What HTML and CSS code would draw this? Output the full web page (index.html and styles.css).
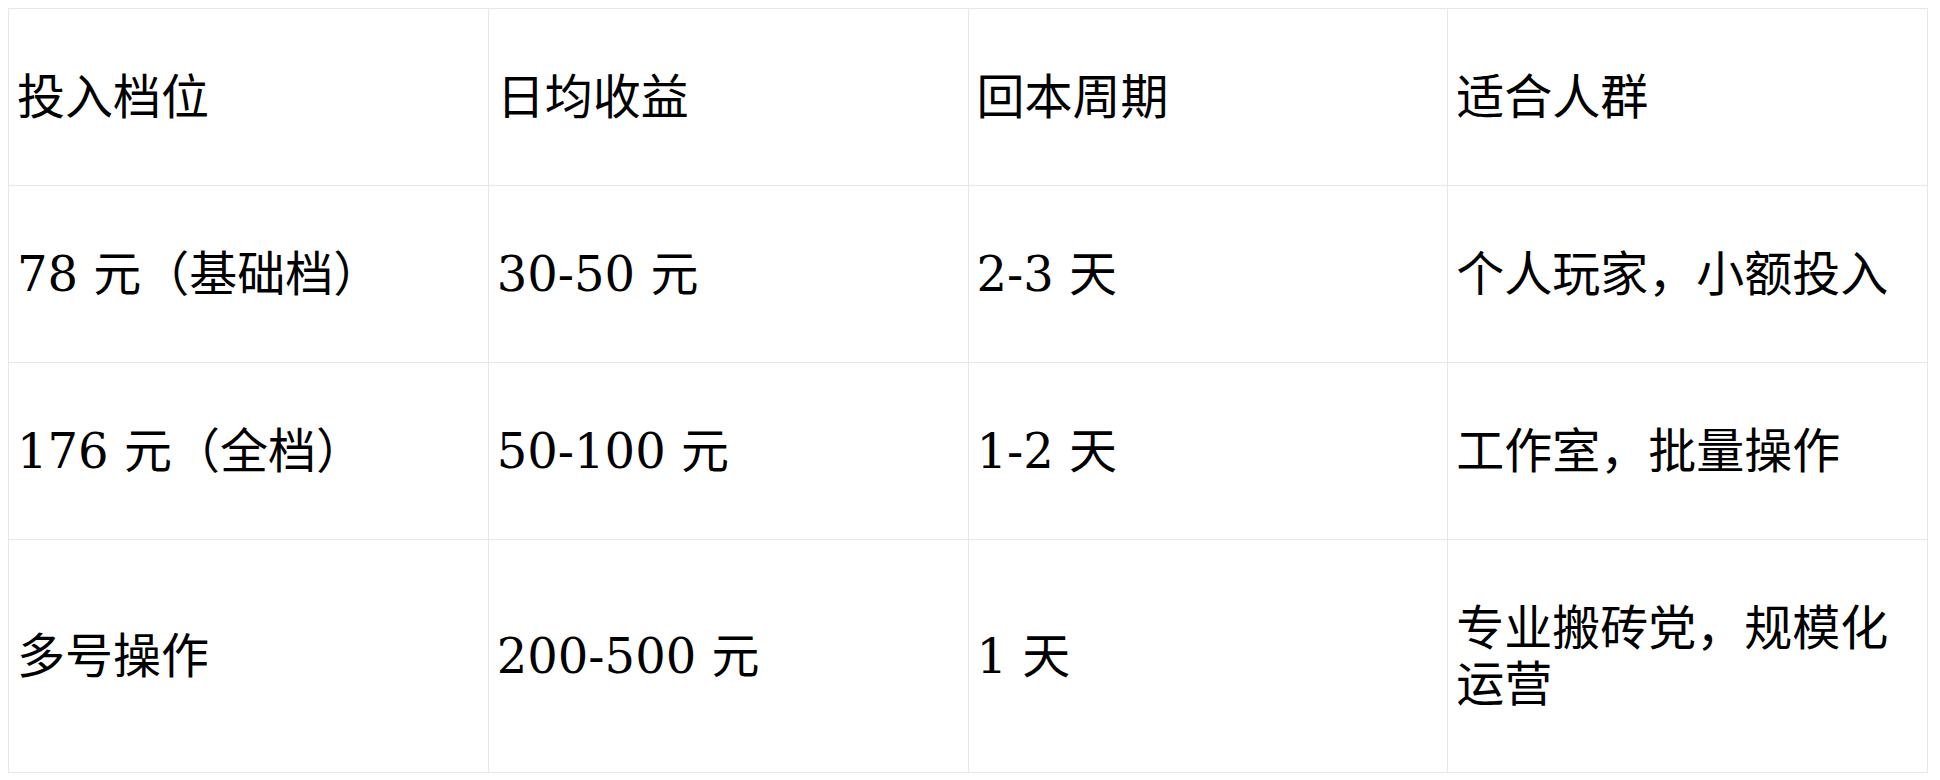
FILE: index.html
```html
<!DOCTYPE html>
<html lang="zh-CN">
<head>
<meta charset="utf-8">
<title>投入档位</title>
<link rel="stylesheet" href="styles.css">
</head>
<body>
<table class="plan-table">
  <thead>
    <tr>
      <th>投入档位</th>
      <th>日均收益</th>
      <th>回本周期</th>
      <th>适合人群</th>
    </tr>
  </thead>
  <tbody>
    <tr>
      <td>78 元（基础档）</td>
      <td>30-50 元</td>
      <td>2-3 天</td>
      <td>个人玩家，小额投入</td>
    </tr>
    <tr>
      <td>176 元（全档）</td>
      <td>50-100 元</td>
      <td>1-2 天</td>
      <td>工作室，批量操作</td>
    </tr>
    <tr>
      <td>多号操作</td>
      <td>200-500 元</td>
      <td>1 天</td>
      <td>专业搬砖党，规模化运营</td>
    </tr>
  </tbody>
</table>
</body>
</html>
```

FILE: styles.css
```css
html, body {
  background: #ffffff;
}
body {
  margin: 8px;
  font-family: "DejaVu Serif", "Noto Sans CJK SC", serif;
  color: #000000;
}
.plan-table {
  width: 1920px;
  border-collapse: collapse;
  table-layout: fixed;
  font-size: 48px;
  line-height: 56px;
}
.plan-table th,
.plan-table td {
  border: 1px solid #e5e7eb;
  padding: 60px 8px;
  text-align: left;
  vertical-align: middle;
  font-weight: normal;
}
```
